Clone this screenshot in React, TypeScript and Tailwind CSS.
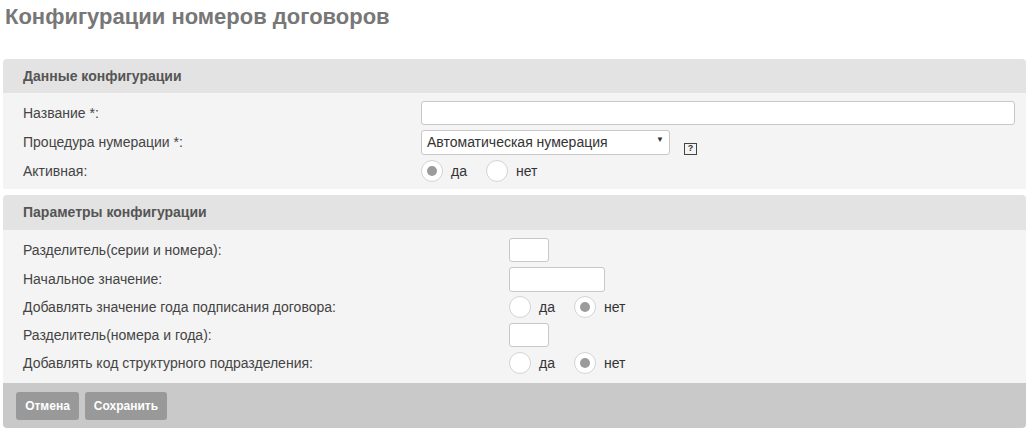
import React from "react";

const font = { fontFamily: '"Liberation Sans", Arial, sans-serif' };

function Radio({ checked, label }: { checked?: boolean; label: string }) {
  return (
    <div className="flex items-center">
      <span className="flex h-[22px] w-[22px] items-center justify-center rounded-full border border-[#d4d4d4] bg-white">
        {checked && <span className="h-[10px] w-[10px] rounded-full bg-[#9b9b9b]" />}
      </span>
      <span className="ml-[8px] text-[14px] text-[#333]">{label}</span>
    </div>
  );
}

function RadioPair({ yes }: { yes: boolean }) {
  return (
    <div className="flex items-center">
      <div className="w-[65px]">
        <Radio checked={yes} label="да" />
      </div>
      <Radio checked={!yes} label="нет" />
    </div>
  );
}

function Row({ label, labelW, h, children }: { label: string; labelW: string; h: string; children: React.ReactNode }) {
  return (
    <div className={`flex items-center ${h}`}>
      <div className={`${labelW} pl-[20px] text-[14px] text-[#444]`}>{label}</div>
      {children}
    </div>
  );
}

export default function App() {
  return (
    <div style={font} className="w-[1032px] h-[440px] bg-white">
      <h1 className="pl-[5px] pt-[5px] text-[22px] font-bold text-[#777] leading-[24px]">
        Конфигурации номеров договоров
      </h1>
      <div className="mx-[3px] mt-[30px] w-[1023px]">
        {/* Panel 1 */}
        <div className="rounded-t-[4px] bg-[#e3e3e3] h-[34px] flex items-center pl-[20px] text-[14px] font-bold text-[#555]">
          Данные конфигурации
        </div>
        <div className="bg-[#f4f4f4] pt-[8px] pb-[7px]">
          <Row label="Название *:" labelW="w-[418px]" h="h-[24px]">
            <div className="h-[24px] w-[594px] rounded-[3px] border border-[#c8c8c8] bg-white" />
          </Row>
          <div className="mt-[5px]">
            <Row label="Процедура нумерации *:" labelW="w-[418px]" h="h-[25px]">
              <div className="relative flex h-[25px] w-[249px] items-center rounded-[3px] border border-[#c8c8c8] bg-white pl-[5px] text-[14px] text-[#333]">
                Автоматическая нумерация
                <span className="absolute right-[5px] top-[3px] text-[8px] text-[#333]">▼</span>
              </div>
              <div className="ml-[14px] mt-[12px] flex h-[12px] w-[13px] items-center justify-center border border-[#444] text-[9px] font-bold leading-none text-[#333]">
                ?
              </div>
            </Row>
          </div>
          <div className="mt-[5px]">
            <Row label="Активная:" labelW="w-[418px]" h="h-[22px]">
              <RadioPair yes={true} />
            </Row>
          </div>
        </div>

        {/* Panel 2 */}
        <div className="mt-[6px] rounded-t-[4px] bg-[#e3e3e3] h-[35px] flex items-center pl-[20px] text-[14px] font-bold text-[#555]">
          Параметры конфигурации
        </div>
        <div className="bg-[#f4f4f4] pt-[8px] pb-[9px]">
          <Row label="Разделитель(серии и номера):" labelW="w-[506px]" h="h-[24px]">
            <div className="h-[24px] w-[40px] rounded-[3px] border border-[#c8c8c8] bg-white" />
          </Row>
          <div className="mt-[5px]">
            <Row label="Начальное значение:" labelW="w-[506px]" h="h-[25px]">
              <div className="h-[25px] w-[96px] rounded-[3px] border border-[#c8c8c8] bg-white" />
            </Row>
          </div>
          <div className="mt-[4px]">
            <Row label="Добавлять значение года подписания договора:" labelW="w-[506px]" h="h-[22px]">
              <RadioPair yes={false} />
            </Row>
          </div>
          <div className="mt-[5px]">
            <Row label="Разделитель(номера и года):" labelW="w-[506px]" h="h-[24px]">
              <div className="h-[24px] w-[40px] rounded-[3px] border border-[#c8c8c8] bg-white" />
            </Row>
          </div>
          <div className="mt-[5px]">
            <Row label="Добавлять код структурного подразделения:" labelW="w-[506px]" h="h-[22px]">
              <RadioPair yes={false} />
            </Row>
          </div>
        </div>

        {/* Footer */}
        <div className="flex h-[45px] items-center gap-[6px] rounded-b-[4px] bg-[#c9c9c9] pl-[13px]">
          <button className="h-[28px] w-[63px] rounded-[3px] bg-[#999] text-[12px] font-bold text-white">
            Отмена
          </button>
          <button className="h-[28px] w-[82px] rounded-[3px] bg-[#999] text-[12px] font-bold text-white">
            Сохранить
          </button>
        </div>
      </div>
    </div>
  );
}
